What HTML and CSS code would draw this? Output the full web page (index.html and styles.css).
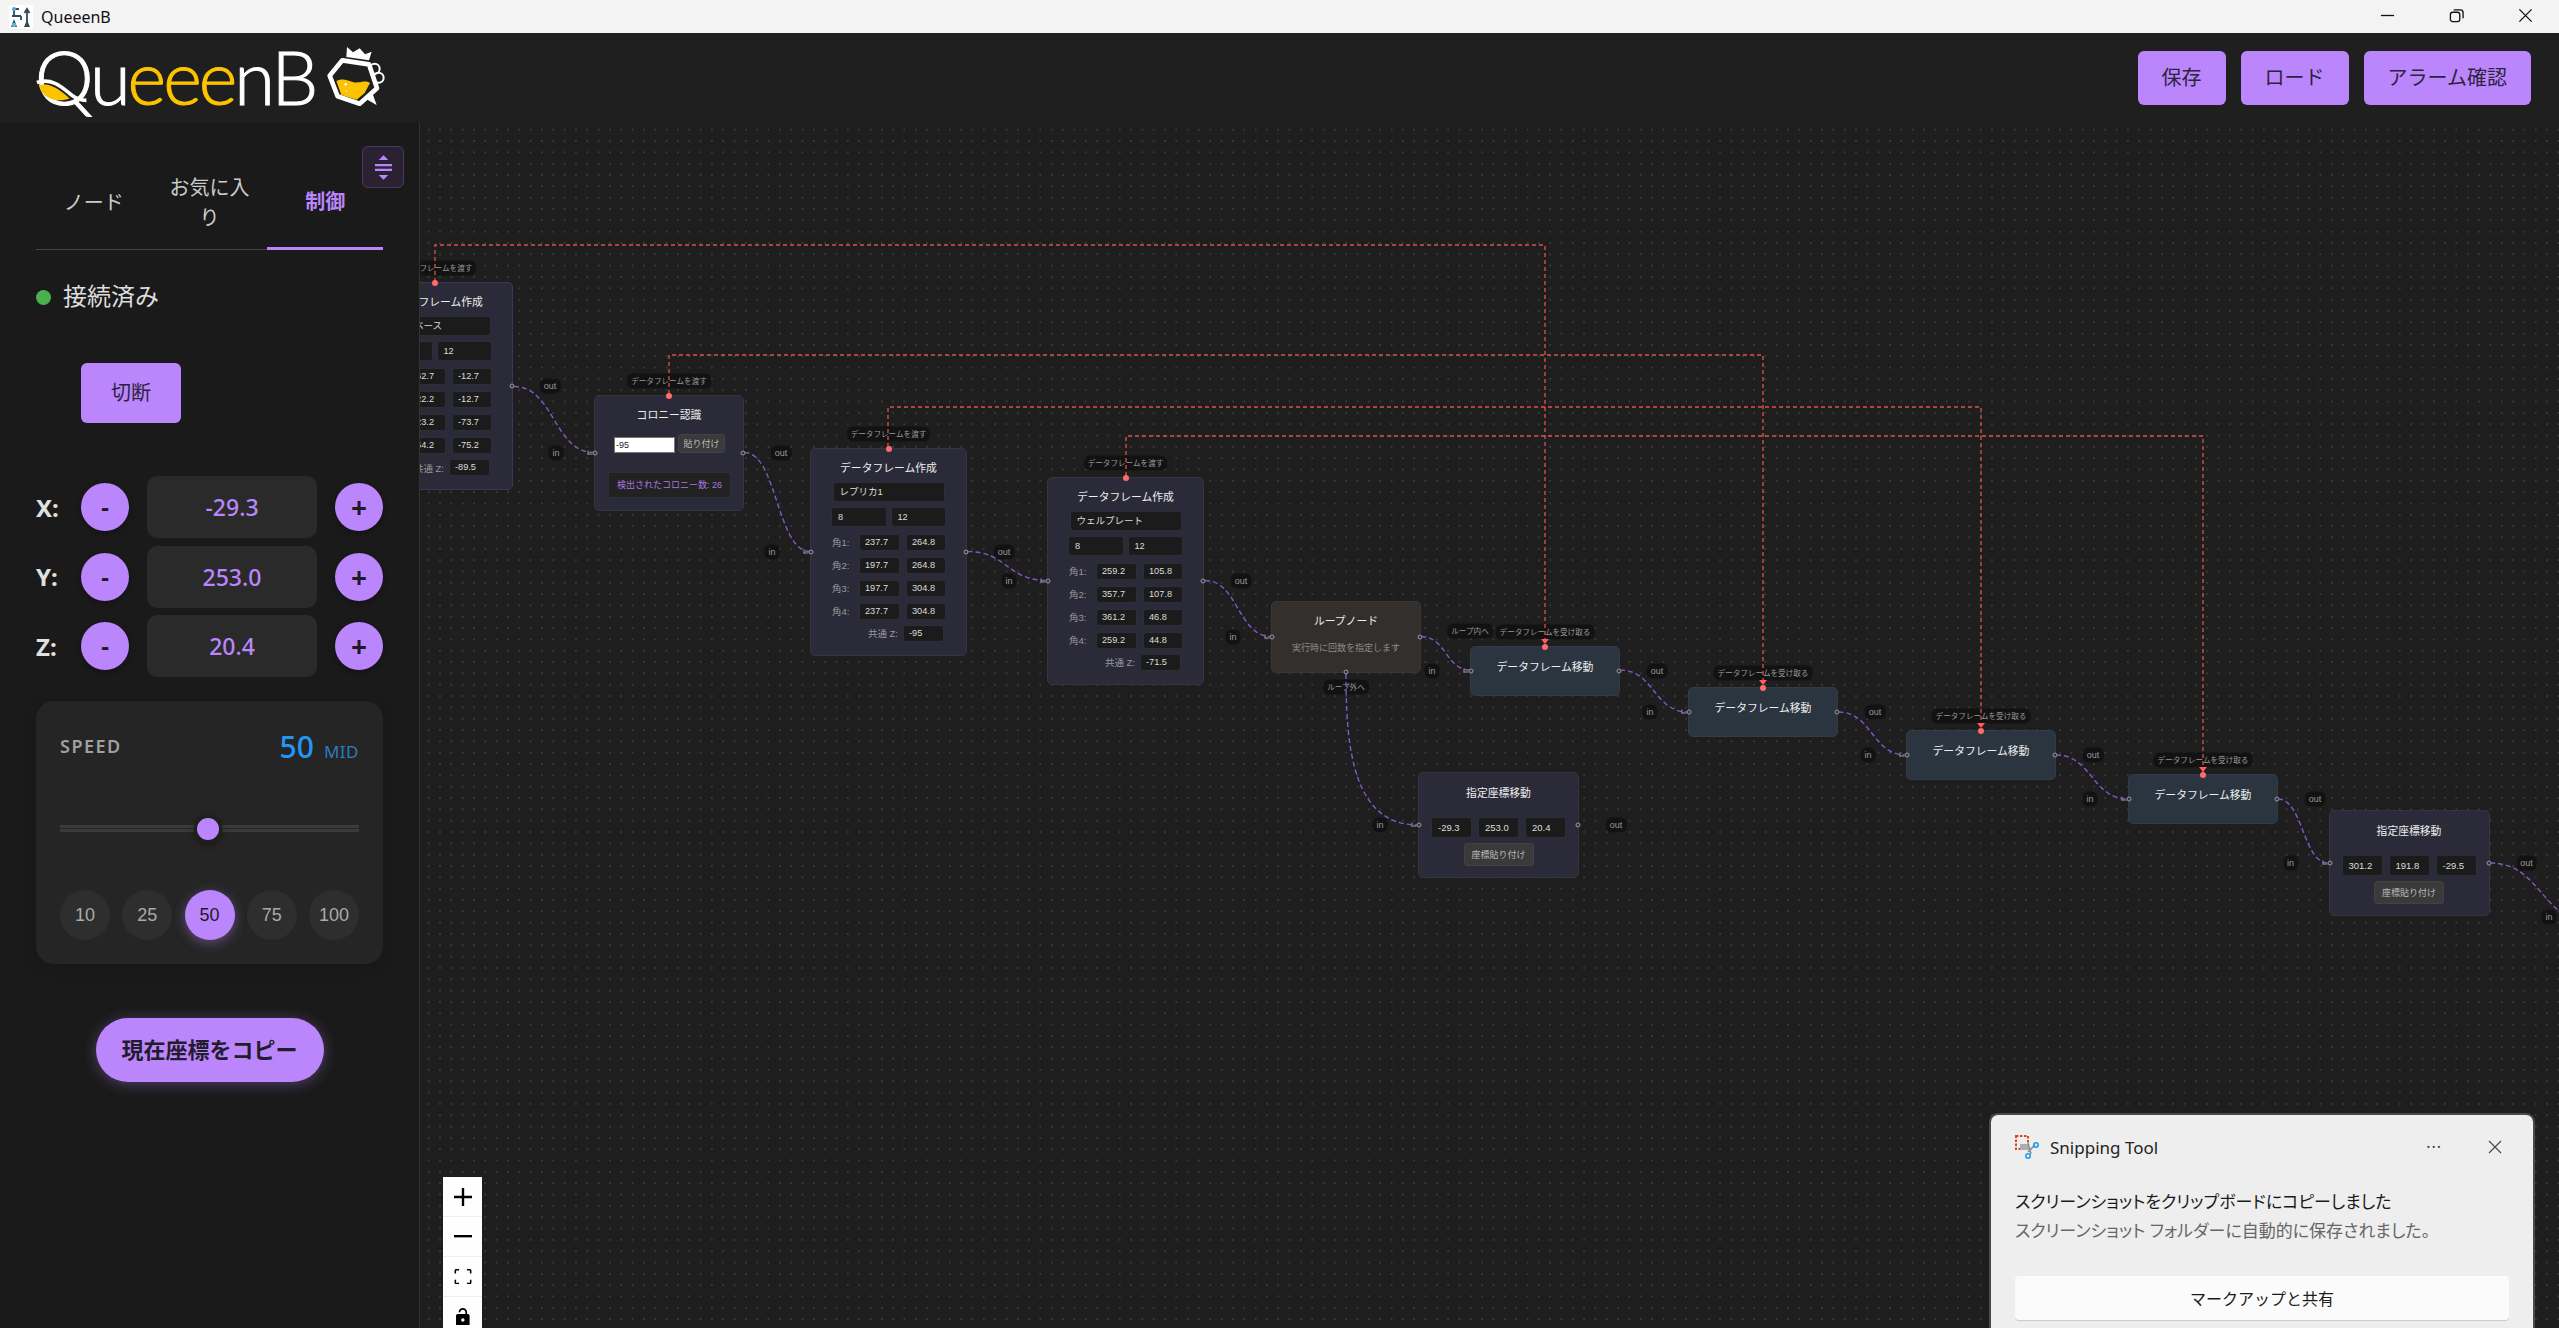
FILE: index.html
```html
<!DOCTYPE html>
<html lang="ja">
<head>
  <meta charset="utf-8">
  <title>QueeenB</title>
  <link rel="stylesheet" href="styles.css">
</head>
<body>

  <!-- window chrome -->
  <div class="titlebar">
    <svg class="app-icon" viewBox="0 0 24 24">
      <rect width="24" height="24" fill="#fff"/>
      <path d="M5 4h5M5 4v7M3 11h9M12 11v4M18 20V5M15.5 8 18 4l2.5 4" fill="none" stroke="#2f4a5c" stroke-width="1.8"/>
      <circle cx="5" cy="4" r="2" fill="#4bb0d0"/>
      <path d="M2 22l3-8 3 8zM15 22l3-7 3 7z" fill="#2f4a5c"/>
      <circle cx="5" cy="20" r="2.2" fill="#5bb8d8"/>
    </svg>
    <span class="app-name">QueeenB</span>
    <div class="win-controls">
      <svg viewBox="0 0 16 16"><path d="M1 8h14" stroke="#111" stroke-width="1.4"/></svg>
      <svg viewBox="0 0 16 16"><rect x="1.5" y="4.5" width="10" height="10" rx="2.5" fill="none" stroke="#111" stroke-width="1.4"/><path d="M5 2h7a3 3 0 0 1 3 3v6" fill="none" stroke="#111" stroke-width="1.4"/></svg>
      <svg viewBox="0 0 16 16"><path d="M1.5 1.5l13 13M14.5 1.5l-13 13" stroke="#111" stroke-width="1.4"/></svg>
    </div>
  </div>

  <div class="header">
    <div class="logo">
      <div class="logo-word">
        <span>Qu</span><span class="logo-yellow">eee</span><span>nB</span>
        <svg class="logo-swoosh" viewBox="0 0 60 30">
          <path d="M3 9c12-4 24 6 33 14-10 4-28 3-33-14z" fill="#fdc300"/>
          <path d="M1 6c16-6 28 6 38 14 5 4 9 5 15 5" fill="none" stroke="#fff" stroke-width="4"/>
        </svg>
      </div>
      <svg class="logo-jug" viewBox="960 126 195 198">
        <path d="M1030 168l2-30 18 16 20-12 16 18 20-8-8 26z" fill="#fff"/>
        <path d="M1018 178l80 12 24 72-52 46-66-22-24-62z" fill="none" stroke="#fff" stroke-width="14" stroke-linejoin="round"/>
        <path d="M1000 240c30-14 42 8 66 4 14-2 24-6 35 2l-16 30-24 20-46-14z" fill="#fdc300"/>
        <circle cx="1028" cy="250" r="4" fill="#fff"/>
        <circle cx="1030" cy="270" r="2.5" fill="#fff"/>
        <circle cx="1115" cy="203" r="15" fill="none" stroke="#fff" stroke-width="6"/>
        <circle cx="1127" cy="230" r="15" fill="none" stroke="#fff" stroke-width="6"/>
        <path d="M1085 292l36 20-14-38z" fill="#fff"/>
      </svg>
    </div>
    <div class="header-actions">
      <button class="btn">保存</button>
      <button class="btn">ロード</button>
      <button class="btn">アラーム確認</button>
    </div>
  </div>

  <div class="main">

    <div class="sidebar">
      <button class="collapse-btn">
        <svg viewBox="0 0 20 28">
          <path d="M10 1l5 5H5zM10 27l-5-5h10z" fill="#bb86fc"/>
          <path d="M1 11.5h18M1 16.5h18" stroke="#bb86fc" stroke-width="2.4"/>
        </svg>
      </button>

      <div class="tabs">
        <div class="tab">ノード</div>
        <div class="tab">お気に入り</div>
        <div class="tab tab-active">制御</div>
      </div>

      <div class="status"><i class="status-dot"></i>接続済み</div>
      <button class="btn btn-disconnect">切断</button>

      <div class="axis-row">
        <span class="axis-label">X:</span>
        <button class="round-btn">-</button>
        <div class="axis-value">-29.3</div>
        <button class="round-btn round-plus">+</button>
      </div>
      <div class="axis-row">
        <span class="axis-label">Y:</span>
        <button class="round-btn">-</button>
        <div class="axis-value">253.0</div>
        <button class="round-btn round-plus">+</button>
      </div>
      <div class="axis-row">
        <span class="axis-label">Z:</span>
        <button class="round-btn">-</button>
        <div class="axis-value">20.4</div>
        <button class="round-btn round-plus">+</button>
      </div>

      <div class="speed-card">
        <div class="speed-head">
          <span class="speed-label">SPEED</span>
          <span class="speed-value">50<small>MID</small></span>
        </div>
        <div class="speed-slider">
          <div class="speed-track"></div>
          <div class="speed-thumb"></div>
        </div>
        <div class="speed-presets">
          <button class="preset">10</button>
          <button class="preset">25</button>
          <button class="preset preset-active">50</button>
          <button class="preset">75</button>
          <button class="preset">100</button>
        </div>
      </div>

      <div class="copy-wrap"><button class="copy-btn">現在座標をコピー</button></div>
    </div>

    <div class="canvas">
      <!-- flow layer uses window coordinates, nodes sit on it freely -->
      <div class="flow">

        <div class="node node-df node-a">
          <i class="handle handle-send"></i><i class="handle handle-l"></i><i class="handle handle-r"></i>
          <span class="pill pill-top">データフレームを渡す</span>
          <span class="pill pill-in">in</span><span class="pill pill-out">out</span>
          <div class="node-title">データフレーム作成</div>
          <div class="field field-name">データベース</div>
          <div class="size-row"><div class="field">8</div><div class="field">12</div></div>
          <div class="corner-row"><label>角1:</label><div class="field">262.7</div><div class="field">-12.7</div></div>
          <div class="corner-row"><label>角2:</label><div class="field">222.2</div><div class="field">-12.7</div></div>
          <div class="corner-row"><label>角3:</label><div class="field">223.2</div><div class="field">-73.7</div></div>
          <div class="corner-row"><label>角4:</label><div class="field">264.2</div><div class="field">-75.2</div></div>
          <div class="z-row"><label>共通 Z:</label><div class="field">-89.5</div></div>
        </div>

        <div class="node node-colony">
          <i class="handle handle-send"></i><i class="handle handle-l"></i><i class="handle handle-r"></i>
          <span class="pill pill-top">データフレームを渡す</span>
          <span class="pill pill-in">in</span><span class="pill pill-out">out</span>
          <div class="node-title">コロニー認識</div>
          <div class="colony-row">
            <div class="colony-input">-95</div>
            <button class="small-btn colony-paste">貼り付け</button>
          </div>
          <div class="colony-result">検出されたコロニー数: 26</div>
        </div>

        <div class="node node-df node-c">
          <i class="handle handle-send"></i><i class="handle handle-l"></i><i class="handle handle-r"></i>
          <span class="pill pill-top">データフレームを渡す</span>
          <span class="pill pill-in">in</span><span class="pill pill-out">out</span>
          <div class="node-title">データフレーム作成</div>
          <div class="field field-name">レプリカ1</div>
          <div class="size-row"><div class="field">8</div><div class="field">12</div></div>
          <div class="corner-row"><label>角1:</label><div class="field">237.7</div><div class="field">264.8</div></div>
          <div class="corner-row"><label>角2:</label><div class="field">197.7</div><div class="field">264.8</div></div>
          <div class="corner-row"><label>角3:</label><div class="field">197.7</div><div class="field">304.8</div></div>
          <div class="corner-row"><label>角4:</label><div class="field">237.7</div><div class="field">304.8</div></div>
          <div class="z-row"><label>共通 Z:</label><div class="field">-95</div></div>
        </div>

        <div class="node node-df node-d">
          <i class="handle handle-send"></i><i class="handle handle-l"></i><i class="handle handle-r"></i>
          <span class="pill pill-top">データフレームを渡す</span>
          <span class="pill pill-in">in</span><span class="pill pill-out">out</span>
          <div class="node-title">データフレーム作成</div>
          <div class="field field-name">ウェルプレート</div>
          <div class="size-row"><div class="field">8</div><div class="field">12</div></div>
          <div class="corner-row"><label>角1:</label><div class="field">259.2</div><div class="field">105.8</div></div>
          <div class="corner-row"><label>角2:</label><div class="field">357.7</div><div class="field">107.8</div></div>
          <div class="corner-row"><label>角3:</label><div class="field">361.2</div><div class="field">46.8</div></div>
          <div class="corner-row"><label>角4:</label><div class="field">259.2</div><div class="field">44.8</div></div>
          <div class="z-row"><label>共通 Z:</label><div class="field">-71.5</div></div>
        </div>

        <div class="node node-loop">
          <i class="handle handle-l"></i><i class="handle handle-r"></i><i class="handle handle-b"></i>
          <span class="pill pill-in">in</span>
          <span class="pill pill-loop-in">ループ内へ</span>
          <span class="pill pill-loop-out">ループ外へ</span>
          <div class="node-title">ループノード</div>
          <div class="loop-note">実行時に回数を指定します</div>
        </div>

        <div class="node node-move node-m1">
          <i class="handle handle-recv"></i><i class="handle handle-l"></i><i class="handle handle-r"></i>
          <span class="pill pill-top">データフレームを受け取る</span>
          <span class="pill pill-in">in</span><span class="pill pill-out">out</span>
          <div class="node-title">データフレーム移動</div>
        </div>
        <div class="node node-move node-m2">
          <i class="handle handle-recv"></i><i class="handle handle-l"></i><i class="handle handle-r"></i>
          <span class="pill pill-top">データフレームを受け取る</span>
          <span class="pill pill-in">in</span><span class="pill pill-out">out</span>
          <div class="node-title">データフレーム移動</div>
        </div>
        <div class="node node-move node-m3">
          <i class="handle handle-recv"></i><i class="handle handle-l"></i><i class="handle handle-r"></i>
          <span class="pill pill-top">データフレームを受け取る</span>
          <span class="pill pill-in">in</span><span class="pill pill-out">out</span>
          <div class="node-title">データフレーム移動</div>
        </div>
        <div class="node node-move node-m4">
          <i class="handle handle-recv"></i><i class="handle handle-l"></i><i class="handle handle-r"></i>
          <span class="pill pill-top">データフレームを受け取る</span>
          <span class="pill pill-in">in</span><span class="pill pill-out">out</span>
          <div class="node-title">データフレーム移動</div>
        </div>

        <div class="node node-coord node-p1">
          <i class="handle handle-l"></i><i class="handle handle-r"></i>
          <span class="pill pill-in">in</span><span class="pill pill-out">out</span>
          <div class="node-title">指定座標移動</div>
          <div class="coord-row"><div class="field">-29.3</div><div class="field">253.0</div><div class="field">20.4</div></div>
          <button class="small-btn coord-paste">座標貼り付け</button>
        </div>
        <div class="node node-coord node-p2">
          <i class="handle handle-l"></i><i class="handle handle-r"></i>
          <span class="pill pill-in">in</span><span class="pill pill-out">out</span>
          <div class="node-title">指定座標移動</div>
          <div class="coord-row"><div class="field">301.2</div><div class="field">191.8</div><div class="field">-29.5</div></div>
          <button class="small-btn coord-paste">座標貼り付け</button>
        </div>
        <span class="pill pill-next">in</span>

        <svg class="edges" viewBox="0 0 2559 1328">
          <g class="edge-flow">
            <path d="M514 386.5C554 386.5 554 452.5 594 452.5"/>
            <path d="M744.5 452.5C777 452.5 777 551.5 810 551.5"/>
            <path d="M967.5 551.5C1007 551.5 1007 580.5 1047 580.5"/>
            <path d="M1205 580.5C1238 580.5 1238 636.5 1271 636.5"/>
            <path d="M1421 636.5C1446 636.5 1446 670 1470 670"/>
            <path d="M1346 674C1346 745 1352 825 1418 825"/>
            <path d="M1620 670C1654 670 1654 712 1688 712"/>
            <path d="M1838.5 712C1872 712 1872 755 1906 755"/>
            <path d="M2056 755C2092 755 2092 799 2128 799"/>
            <path d="M2278 799C2303 799 2303 863 2328 863"/>
            <path d="M2490 863C2540 863 2540 917 2590 925"/>
          </g>
          <g class="edge-data">
            <path d="M435 282V245H1545V645"/>
            <path d="M669 394V355H1763V687"/>
            <path d="M888 447V407H1981V730"/>
            <path d="M1126 476V436H2203V774"/>
          </g>
        </svg>
      </div>

      <div class="flow-controls">
        <button class="flow-btn"><svg viewBox="0 0 32 32"><path d="M32 18.1H18.1V32h-4.2V18.1H0v-4.2h13.9V0h4.2v13.9H32z"/></svg></button>
        <button class="flow-btn"><svg viewBox="0 0 32 5"><path d="M0 0h32v4.2H0z"/></svg></button>
        <button class="flow-btn"><svg viewBox="0 0 32 28"><path d="M3.7 27.2c-1.5 0-2.7-1.2-2.7-2.7v-5.3h2.7v5.3h5.3v2.7zM23 27.2v-2.7h5.3v-5.3H31v5.3c0 1.5-1.2 2.7-2.7 2.7zM1 8V2.7C1 1.2 2.2 0 3.7 0H9v2.7H3.7V8zM28.3 8V2.7H23V0h5.3C29.8 0 31 1.2 31 2.7V8z"/></svg></button>
        <button class="flow-btn"><svg viewBox="0 0 25 32"><path d="M21.3 10.7h-1.5V7.6C19.8 3.4 16.4 0 12.2 0S4.6 3.4 4.6 7.6h3c0-2.5 2-4.6 4.6-4.6s4.6 2 4.6 4.6v3.1H3c-1.7 0-3 1.4-3 3v15.3c0 1.7 1.4 3 3 3h18.3c1.700 0 3-1.4 3-3V13.7c0-1.7-1.3-3-3-3zM12.2 24.4c-1.7 0-3-1.4-3-3s1.4-3 3-3 3 1.4 3 3-1.3 3-3 3z"/></svg></button>
      </div>

      <div class="toast">
        <div class="toast-head">
          <svg class="toast-icon" viewBox="0 0 24 24">
            <rect x="1" y="1" width="12" height="13" fill="none" stroke="#d8491f" stroke-width="2" stroke-dasharray="2.5 1.5"/>
            <path d="M5 9h9v6H5z" fill="#a9adb3"/>
            <path d="M13 8l3 11M20 10l-7 7" stroke="#8a8f96" stroke-width="1.6"/>
            <circle cx="21" cy="10" r="2.2" fill="none" stroke="#1f9be8" stroke-width="1.6"/>
            <circle cx="13" cy="21" r="2.2" fill="none" stroke="#1f9be8" stroke-width="1.6"/>
          </svg>
          <span class="toast-app">Snipping Tool</span>
          <span class="toast-more">···</span>
          <svg class="toast-close" viewBox="0 0 14 14"><path d="M1 1l12 12M13 1L1 13" stroke="#444" stroke-width="1.1"/></svg>
        </div>
        <div class="toast-title">スクリーンショットをクリップボードにコピーしました</div>
        <div class="toast-sub">スクリーンショット フォルダーに自動的に保存されました。</div>
        <button class="toast-btn">マークアップと共有</button>
      </div>
    </div>
  </div>

</body>
</html>
```

FILE: styles.css
```css
*{
  box-sizing: border-box;
}

html, body{
  margin: 0;
  padding: 0;
}

body{
  width: 2559px;
  height: 1328px;
  overflow: hidden;
  background-color: #1a1a1a;
  font-family: "Noto Sans", "Noto Sans CJK JP", sans-serif;
  color: #ddd;
}

button{
  font-family: inherit;
  border: 0;
  padding: 0;
  cursor: pointer;
}

/* title bar */
.titlebar{
  display: flex;
  align-items: center;
  height: 33px;
  padding-left: 9px;
  background-color: #f3f3f3;
}
.app-icon{
  width: 24px;
  height: 24px;
}
.app-name{
  margin-left: 8px;
  font-size: 16px;
  color: #111;
}
.win-controls{
  display: flex;
  gap: 54px;
  margin-left: auto;
  padding-right: 26px;
  margin-top: -2px;
}
.win-controls svg{
  width: 15px;
  height: 15px;
}

/* header */
.header{
  display: flex;
  align-items: center;
  justify-content: space-between;
  height: 90px;
  padding: 0 28px 0 35px;
  background-color: #1f1f1f;
}
.logo{
  display: flex;
  align-items: center;
}
.logo-word{
  position: relative;
  font-family: "Lato", sans-serif;
  font-size: 74px;
  font-weight: 300;
  line-height: 90px;
  letter-spacing: -3px;
  -webkit-text-stroke: 1px currentColor;
  color: #fff;
  margin-top: -3px;
}
.logo-yellow{
  color: #fdc300;
}
.logo-swoosh{
  position: absolute;
  left: 1px;
  top: 45px;
  width: 56px;
  height: 28px;
}
.logo-jug{
  width: 65px;
  height: 66px;
  margin-left: 8px;
  margin-top: -4px;
}
.header-actions{
  display: flex;
  gap: 15px;
}
.btn{
  height: 54px;
  padding: 0 24px 4px;
  border-radius: 6px;
  background-color: #bb86fc;
  font-size: 20px;
  color: #2d2340;
}

/* sidebar */
.main{
  display: flex;
  height: 1205px;
}
.sidebar{
  position: relative;
  width: 420px;
  padding: 34px 36px 0;
  border-right: 1px solid #333;
  background-color: #1a1a1a;
}
.collapse-btn{
  position: absolute;
  left: 362px;
  top: 23px;
  display: flex;
  align-items: center;
  justify-content: center;
  width: 42px;
  height: 42px;
  border: 1px solid #4a3a60;
  border-radius: 6px;
  background-color: #2a2233;
}
.collapse-btn svg{
  width: 19px;
  height: 27px;
}
.tabs{
  display: flex;
  width: 347px;
  border-bottom: 1px solid #444;
}
.tab{
  display: flex;
  align-items: center;
  justify-content: center;
  width: 116px;
  padding: 16px 14px;
  font-size: 20px;
  line-height: 30px;
  text-align: center;
  color: #ccc;
}
.tab-active{
  margin-bottom: -1px;
  border-bottom: 3px solid #bb86fc;
  font-weight: 700;
  color: #bb86fc;
}
.status{
  display: flex;
  align-items: center;
  margin-top: 28px;
  margin-bottom: 2px;
  font-size: 24px;
  line-height: 36px;
  color: #ddd;
}
.status-dot{
  width: 15px;
  height: 15px;
  margin-right: 12px;
  margin-top: 2px;
  border-radius: 50%;
  background-color: #4caf50;
}
.btn-disconnect{
  display: block;
  width: 100px;
  height: 60px;
  padding: 0 0 4px;
  margin: 49px 0 53px 45px;
}

.axis-row{
  display: flex;
  align-items: center;
  height: 62px;
  margin-bottom: 7.5px;
}
.axis-label{
  width: 45px;
  font-size: 24px;
  font-weight: 700;
  color: #e0e0e0;
}
.round-btn{
  flex: none;
  width: 48px;
  height: 48px;
  border-radius: 50%;
  background-color: #bb86fc;
  box-shadow: 0 2px 6px rgba(0,0,0,0.3);
  font-size: 24px;
  font-weight: 700;
  line-height: 44px;
  color: #1f1a28;
}
.round-plus{
  font-size: 28px;
}
.axis-value{
  width: 170px;
  height: 62px;
  margin: 0 18px;
  border-radius: 10px;
  background-color: #2a2a2a;
  font-size: 23px;
  font-weight: 500;
  line-height: 62px;
  text-align: center;
  color: #bb86fc;
}

/* speed card */
.speed-card{
  width: 347px;
  height: 263px;
  margin-top: 24px;
  padding: 24px;
  border-radius: 18px;
  background-color: #252525;
  box-shadow: 0 4px 16px rgba(0,0,0,0.15);
}
.speed-head{
  display: flex;
  align-items: center;
  justify-content: space-between;
  height: 42px;
}
.speed-label{
  font-size: 18px;
  font-weight: 600;
  letter-spacing: 1.5px;
  color: #a0a0a0;
}
.speed-value{
  font-size: 30px;
  font-weight: 500;
  color: #2196f3;
}
.speed-value small{
  margin-left: 10px;
  font-size: 17px;
  font-weight: 400;
  letter-spacing: .5px;
  color: #2b7cc0;
}
.speed-slider{
  position: relative;
  display: flex;
  align-items: center;
  height: 123px;
}
.speed-track{
  width: 100%;
  height: 7px;
  border-top: 3px solid #3a3a3a;
  border-bottom: 3px solid #3a3a3a;
}
.speed-thumb{
  position: absolute;
  left: 148px;
  top: 50%;
  width: 28px;
  height: 28px;
  border: 3px solid #1f1f1f;
  border-radius: 50%;
  background-color: #bb86fc;
  box-shadow: 0 2px 6px rgba(0,0,0,0.4);
  transform: translate(-50%, -50%);
}
.speed-presets{
  display: flex;
  justify-content: space-between;
}
.preset{
  width: 50px;
  height: 50px;
  border-radius: 50%;
  background-color: #2e2e2e;
  font-family: "Liberation Sans", sans-serif;
  font-size: 18px;
  color: #aaa;
}
.preset-active{
  background-color: #bb86fc;
  color: #1f1a28;
  box-shadow: 0 3px 12px rgba(187,134,252,0.4);
}
.copy-wrap{
  display: flex;
  justify-content: center;
  margin-top: 54px;
}
.copy-btn{
  width: 228px;
  height: 64px;
  padding-bottom: 4px;
  border-radius: 32px;
  background-color: #bb86fc;
  box-shadow: 0 2px 14px rgba(187,134,252,0.35);
  font-size: 22px;
  font-weight: 700;
  color: #231c2e;
}

/* canvas */
.canvas{
  position: relative;
  flex: 1;
  overflow: hidden;
  background-color: #1e1e1e;
  background-image: radial-gradient(circle, #3e3e3e .6px, transparent 1px);
  background-size: 11.33px 11.33px;
  background-position: 3px 1px;
}
.flow{
  position: absolute;
  left: -420px;
  top: -123px;
  width: 2559px;
  height: 1328px;
}
.edges{
  position: absolute;
  left: 0;
  top: 0;
  width: 2559px;
  height: 1328px;
  pointer-events: none;
}
.edges path{
  fill: none;
}
.edge-flow path{
  stroke: #8458c4;
  stroke-width: 1.4;
  stroke-dasharray: 5 3;
}
.edge-data path{
  stroke: #ff5c5c;
  stroke-width: 1.3;
  stroke-dasharray: 4 3;
  opacity: .85;
}

.node{
  position: absolute;
  border: 1px solid #35343f;
  border-radius: 5px;
  background-color: #2b2a38;
  font-family: "Liberation Sans", "Noto Sans CJK JP", sans-serif;
}
.node-title{
  height: 16px;
  font-size: 10.8px;
  line-height: 16px;
  text-align: center;
  color: #eee;
}
.field{
  height: 100%;
  border: 1px solid #2e2e38;
  border-radius: 3px;
  background-color: #1b1b1b;
  padding-left: 5px;
  overflow: hidden;
  white-space: nowrap;
  font-size: 9.2px;
  color: #ddd;
}

/* data frame nodes */
.node-df{
  width: 157px;
  height: 208px;
  padding: 11px 20px 0;
}
.node-a{
  left: 356px;
  top: 282px;
  border-color: #3f3555;
}
.node-c{
  left: 810px;
  top: 447.5px;
}
.node-d{
  left: 1047px;
  top: 476.5px;
}
.field-name{
  width: 112px;
  height: 20px;
  margin: 6px auto 5px;
  padding-left: 6px;
  font-size: 9.5px;
  line-height: 18px;
}
.size-row{
  display: flex;
  gap: 4px;
  width: 115px;
  height: 20px;
  margin-bottom: 7px;
}
.size-row .field{
  flex: 1;
  padding-left: 6px;
  line-height: 18px;
}
.corner-row{
  display: grid;
  grid-template-columns: 22px 41px 40px;
  column-gap: 6px;
  align-items: center;
  height: 17px;
  margin-bottom: 6px;
}
.corner-row label, .z-row label{
  font-size: 9.5px;
  white-space: nowrap;
  color: #999;
}
.corner-row label{
  padding-left: 1px;
}
.corner-row .field, .z-row .field{
  line-height: 15px;
}
.z-row{
  display: flex;
  align-items: center;
  justify-content: flex-end;
  gap: 5px;
  height: 17px;
  margin-top: -1px;
  padding-right: 2px;
}
.z-row .field{
  width: 41px;
}

/* colony node */
.node-colony{
  left: 594px;
  top: 395px;
  width: 150px;
  height: 116px;
  padding-top: 11px;
}
.colony-row{
  display: flex;
  align-items: flex-end;
  gap: 3px;
  height: 19px;
  margin: 11px 0 0 19px;
}
.colony-input{
  width: 61px;
  height: 16px;
  border: 1px solid #777;
  background-color: #fff;
  padding-left: 1px;
  font-size: 9px;
  line-height: 14px;
  color: #222;
}
.small-btn{
  border: 1px solid #424242;
  border-radius: 3px;
  background-color: #3a3a3a;
  font-family: "Liberation Sans", "Noto Sans CJK JP", sans-serif;
  font-size: 9px;
  color: #bbb;
}
.colony-paste{
  width: 47px;
  height: 19px;
}
.colony-result{
  height: 26px;
  margin: 19px 12px 0 13px;
  border: 1px solid #2e2e38;
  background-color: #222;
  font-size: 9px;
  line-height: 24px;
  text-align: center;
  color: #a779e0;
}

/* loop node */
.node-loop{
  left: 1271px;
  top: 601px;
  width: 150px;
  height: 72px;
  padding-top: 11px;
  border-color: #3a3633;
  background-color: #332f2c;
}
.loop-note{
  margin-top: 12px;
  font-size: 9px;
  text-align: center;
  color: #8c8c8c;
}

/* move nodes */
.node-move{
  width: 150px;
  height: 50px;
  padding-top: 12px;
  border-color: #313c47;
  background-color: #2a3540;
}
.node-m1{
  left: 1470px;
  top: 645.5px;
}
.node-m2{
  left: 1688px;
  top: 687px;
}
.node-m3{
  left: 1906px;
  top: 730px;
}
.node-m4{
  left: 2128px;
  top: 774px;
}

/* coordinate nodes */
.node-coord{
  width: 161px;
  height: 106px;
  padding-top: 12px;
}
.node-p1{
  left: 1418px;
  top: 772px;
}
.node-p2{
  left: 2328.5px;
  top: 809.5px;
}
.coord-row{
  display: flex;
  justify-content: center;
  gap: 6px;
  height: 21px;
  margin-top: 16px;
}
.coord-row .field{
  width: 41px;
  padding-left: 6px;
  font-size: 9.5px;
  line-height: 19px;
}
.coord-paste{
  display: block;
  width: 70px;
  height: 23px;
  margin: 5px auto 0;
}

/* handles and edge labels */
.handle{
  position: absolute;
  width: 5px;
  height: 5px;
  border: 1px solid #999;
  border-radius: 50%;
  background-color: #333;
  transform: translate(-50%, -50%);
}
.handle-l{
  left: 0;
  top: 50%;
}
.handle-l::before{
  content: "";
  position: absolute;
  left: -6px;
  top: 0;
  width: 4px;
  height: 3px;
  border-left: 1px solid #999;
  border-bottom: 1px solid #999;
  transform: translateY(-1px);
}
.handle-r{
  left: 100%;
  top: 50%;
}
.handle-b{
  left: 50%;
  top: 100%;
}
.handle-send, .handle-recv{
  left: 50%;
  top: 0;
  width: 6px;
  height: 6px;
  border: 0;
  background-color: #ff6b6b;
  z-index: 1;
}
.handle-recv::before{
  content: "";
  position: absolute;
  left: -1px;
  top: -5px;
  border-left: 4px solid transparent;
  border-right: 4px solid transparent;
  border-top: 5px solid #ff5c5c;
}
.pill{
  position: absolute;
  height: 15px;
  padding: 0 4px;
  border-radius: 6px;
  background-color: #121212;
  font-family: "Liberation Sans", "Noto Sans CJK JP", sans-serif;
  font-size: 7.6px;
  line-height: 15px;
  white-space: nowrap;
  color: #999;
  transform: translate(-50%, -50%);
}
.pill-top{
  left: 50%;
  top: -15px;
}
.pill-in, .pill-out, .pill-next{
  font-size: 9px;
}
.pill-in{
  left: -39px;
  top: 50%;
}
.pill-out{
  left: calc(100% + 38px);
  top: 50%;
}
.pill-loop-in{
  left: 198px;
  top: 29px;
}
.pill-loop-out{
  left: 50%;
  top: calc(100% + 15px);
}
.pill-next{
  left: 2549px;
  top: 917px;
}

/* flow zoom controls */
.flow-controls{
  position: absolute;
  left: 23px;
  top: 1054px;
  width: 39px;
}
.flow-btn{
  display: flex;
  align-items: center;
  justify-content: center;
  width: 39px;
  height: 40px;
  border-bottom: 1px solid #eee;
  background-color: #fefefe;
}
.flow-btn svg{
  width: 18px;
  max-height: 18px;
}
.flow-btn:nth-child(4) svg{
  width: 14px;
}

/* snipping tool toast */
.toast{
  position: absolute;
  left: 1569px;
  top: 990px;
  width: 546px;
  height: 240px;
  padding: 0 24px;
  border: 2px solid #4a4a4a;
  border-radius: 9px;
  background-color: #eee;
  font-family: "Noto Sans", "Noto Sans CJK JP", sans-serif;
  color: #1a1a1a;
}
.toast-head{
  display: flex;
  align-items: center;
  height: 28px;
  margin-top: 18px;
}
.toast-icon{
  width: 24px;
  height: 24px;
  margin-right: 11px;
}
.toast-app{
  font-size: 17px;
  color: #222;
}
.toast-more{
  margin-left: auto;
  font-size: 16px;
  letter-spacing: 1px;
  color: #444;
}
.toast-close{
  width: 14px;
  height: 14px;
  margin: 0 7px 0 46px;
}
.toast-title{
  margin-top: 26px;
  font-size: 17px;
  line-height: 29px;
  font-feature-settings: "palt";
}
.toast-sub{
  font-size: 17px;
  line-height: 29px;
  font-feature-settings: "palt";
  color: #666;
}
.toast-btn{
  display: block;
  width: 494px;
  height: 44px;
  margin-top: 31px;
  border-radius: 4px;
  background-color: #fbfbfb;
  box-shadow: 0 1px 0 #ccc;
  font-size: 16px;
  color: #1a1a1a;
}
```
